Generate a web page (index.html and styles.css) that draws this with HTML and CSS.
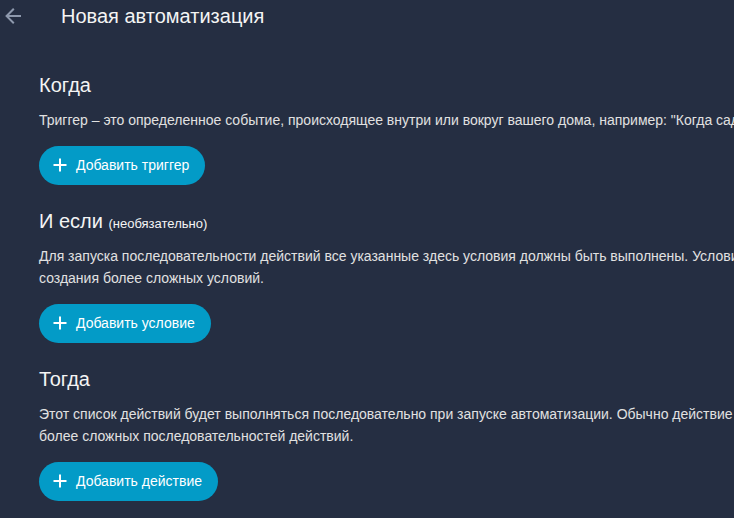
FILE: index.html
```html
<!DOCTYPE html>
<html lang="ru">
<head>
  <meta charset="UTF-8" />
  <meta name="viewport" content="width=device-width, initial-scale=1" />
  <title>Новая автоматизация</title>
  <link rel="stylesheet" href="styles.css">
</head>
<body>

  <header class="toolbar">
    <button class="back" type="button" aria-label="Назад">
      <svg viewBox="0 0 24 24" width="24" height="24"><path d="M20,11V13H8L13.5,18.5L12.08,19.92L4.16,12L12.08,4.08L13.5,5.5L8,11H20Z" /></svg>
    </button>
    <div class="title">Новая автоматизация</div>
  </header>

  <main class="content">
    <section class="block">
      <h2>Когда</h2>
      <p>Триггер – это определенное событие, происходящее внутри или вокруг вашего дома, например: "Когда садится солнце".</p>
      <button class="add" type="button">
        <svg viewBox="0 0 18 18" width="18" height="18"><path d="M9 2.5V15.5M2.5 9H15.5" /></svg>
        Добавить триггер
      </button>
    </section>

    <section class="block">
      <h2>И если <span class="hint">(необязательно)</span></h2>
      <p>Для запуска последовательности действий все указанные здесь условия должны быть выполнены. Условия можно объединить с помощью логических блоков для создания более сложных условий.</p>
      <button class="add" type="button">
        <svg viewBox="0 0 18 18" width="18" height="18"><path d="M9 2.5V15.5M2.5 9H15.5" /></svg>
        Добавить условие
      </button>
    </section>

    <section class="block">
      <h2>Тогда</h2>
      <p>Этот список действий будет выполняться последовательно при запуске автоматизации. Обычно действие управляет устройством. Используйте блоки для создания более сложных последовательностей действий.</p>
      <button class="add" type="button">
        <svg viewBox="0 0 18 18" width="18" height="18"><path d="M9 2.5V15.5M2.5 9H15.5" /></svg>
        Добавить действие
      </button>
    </section>
  </main>

</body>
</html>
```

FILE: styles.css
```css
* {
  margin: 0;
  padding: 0;
  box-sizing: border-box;
}

body {
  font-family: "Liberation Sans", Arial, sans-serif;
  background-color: #252e42;
  color: #e1e1e1;
  overflow: hidden;
}

/* Top bar */
.toolbar {
  display: flex;
  align-items: center;
  height: 32px;
  padding-left: 1px;
}

.back {
  width: 24px;
  height: 24px;
  border: none;
  background: none;
  fill: #8e99ad;
  cursor: pointer;
}

.back svg {
  display: block;
}

.title {
  margin-left: 36px;
  font-size: 20px;
  color: #f4f4f4;
}

/* Editor blocks */
.content {
  width: 1130px;
  padding: 41px 0 0 39px;
}

.block + .block {
  margin-top: 24px;
}

.block h2 {
  font-size: 20px;
  font-weight: normal;
  line-height: 24px;
  color: #f4f4f4;
}

.hint {
  font-size: 13px;
  line-height: 1;
}

.block p {
  margin-top: 12px;
  font-size: 14px;
  line-height: 22.5px;
}

.add {
  display: flex;
  align-items: center;
  gap: 7px;
  height: 39px;
  margin-top: 14px;
  padding: 0 16px 0 12px;
  border: none;
  border-radius: 20px;
  background: #039bc7;
  color: #fff;
  font-family: inherit;
  font-size: 14px;
  cursor: pointer;
}

.add svg {
  stroke: #fff;
  stroke-width: 2;
}
```
